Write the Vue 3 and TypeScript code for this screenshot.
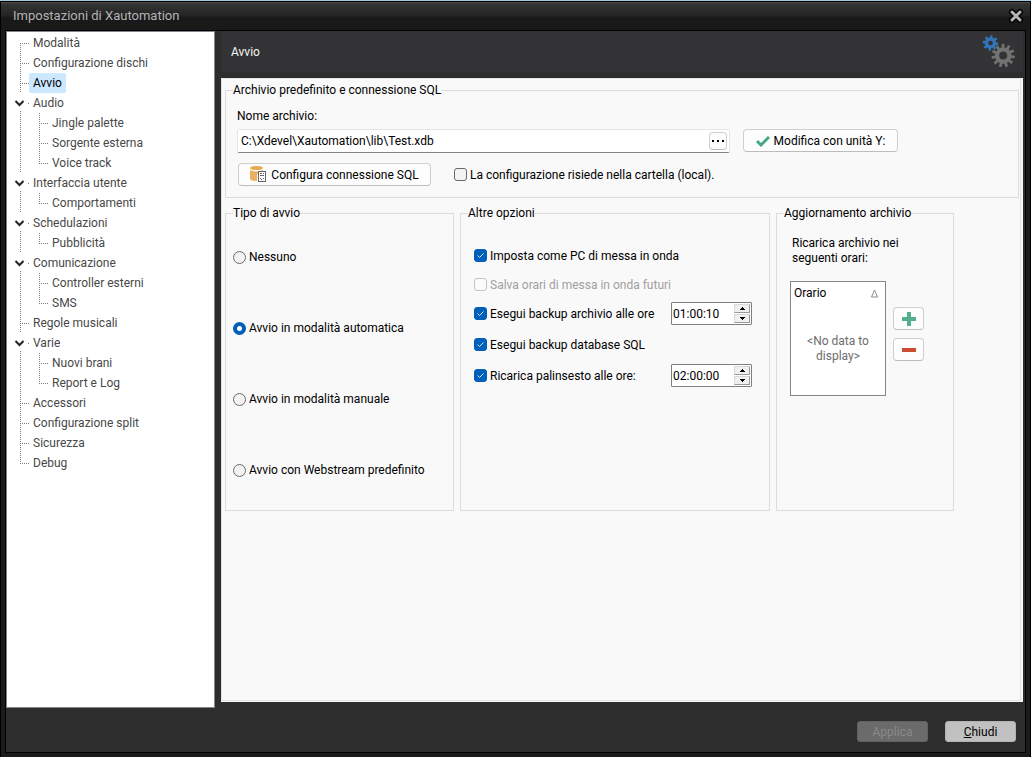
<script setup lang="ts">
import { ref } from 'vue'

interface TreeRow {
  label: string
  level: 0 | 1
  open?: boolean
  last?: boolean
}

const tree: TreeRow[] = [
  { label: 'Modalità', level: 0 },
  { label: 'Configurazione dischi', level: 0 },
  { label: 'Avvio', level: 0 },
  { label: 'Audio', level: 0, open: true },
  { label: 'Jingle palette', level: 1 },
  { label: 'Sorgente esterna', level: 1 },
  { label: 'Voice track', level: 1, last: true },
  { label: 'Interfaccia utente', level: 0, open: true },
  { label: 'Comportamenti', level: 1, last: true },
  { label: 'Schedulazioni', level: 0, open: true },
  { label: 'Pubblicità', level: 1, last: true },
  { label: 'Comunicazione', level: 0, open: true },
  { label: 'Controller esterni', level: 1 },
  { label: 'SMS', level: 1, last: true },
  { label: 'Regole musicali', level: 0 },
  { label: 'Varie', level: 0, open: true },
  { label: 'Nuovi brani', level: 1 },
  { label: 'Report e Log', level: 1, last: true },
  { label: 'Accessori', level: 0 },
  { label: 'Configurazione split', level: 0 },
  { label: 'Sicurezza', level: 0 },
  { label: 'Debug', level: 0, last: true },
]

function guides(row: TreeRow, index: number): string {
  if (row.level === 1) {
    return `M13.5 0V20M32.5 0V${row.last ? 10 : 20}M32 10.5H41`
  }
  if (row.open) {
    return 'M13.5 18V20M21 10.5H22'
  }
  return `M13.5 ${index === 0 ? 10 : 0}V${row.last ? 10 : 20}M13 10.5H22`
}

const selected = ref('Avvio')
const archive = ref('C:\\Xdevel\\Xautomation\\lib\\Test.xdb')
const local = ref(false)
const modes = ['Nessuno', 'Avvio in modalità automatica', 'Avvio in modalità manuale', 'Avvio con Webstream predefinito']
const mode = ref(modes[1])
const onAir = ref(true)
const future = ref(false)
const backup = ref(true)
const backupSql = ref(true)
const reload = ref(true)
const times = ref({ backup: '01:00:10', reload: '02:00:00' })

function step(key: 'backup' | 'reload', delta: number) {
  const [h, m, s] = times.value[key].split(':').map(Number)
  const total = (h * 3600 + m * 60 + s + delta + 86400) % 86400
  times.value[key] = [Math.floor(total / 3600), Math.floor(total / 60) % 60, total % 60]
    .map((n) => String(n).padStart(2, '0'))
    .join(':')
}

function gear(cx: number, cy: number, outer: number, inner: number, hole: number, teeth: number): string {
  const pts: string[] = []
  const pitch = (Math.PI * 2) / teeth
  for (let i = 0; i < teeth; i++) {
    const a = i * pitch + 0.12
    for (const [r, o] of [[inner, -0.3], [outer, -0.2], [outer, 0.2], [inner, 0.3]]) {
      pts.push(`${(cx + r * Math.cos(a + o * pitch)).toFixed(2)} ${(cy + r * Math.sin(a + o * pitch)).toFixed(2)}`)
    }
  }
  return `M${pts.join('L')}ZM${cx - hole} ${cy}a${hole} ${hole} 0 1 0 ${hole * 2} 0a${hole} ${hole} 0 1 0 ${-hole * 2} 0Z`
}
const blueGear = gear(8.5, 8, 7.8, 5.6, 2.3, 8)
const greyGear = gear(21.2, 20.6, 11.8, 8.2, 4, 11)
</script>

<template>
  <div class="window">
    <header class="titlebar">
      <h1>Impostazioni di Xautomation</h1>
      <button class="close" type="button" aria-label="Chiudi finestra">
        <svg width="16" height="16" viewBox="0 0 16 16">
          <path d="M4 4L12 12M12 4L4 12" stroke="#000" stroke-width="6" stroke-linecap="round" />
          <path d="M4 4L12 12M12 4L4 12" stroke="#b4b4b4" stroke-width="3" stroke-linecap="round" />
        </svg>
      </button>
    </header>

    <div class="client">
      <div class="columns">
        <nav class="sidebar">
          <ul>
            <li v-for="(row, i) in tree" :key="row.label">
              <svg :width="row.level ? 41 : 22" height="20">
                <path :d="guides(row, i)" fill="none" stroke="#7b7b7b" stroke-dasharray="1 1" />
                <path v-if="row.open" d="M8.5 8L12.5 12L16.5 8" fill="none" stroke="#222" stroke-width="2" />
              </svg>
              <a href="#" :class="{ selected: row.label === selected }" @click.prevent="selected = row.label">{{ row.label }}</a>
            </li>
          </ul>
        </nav>

        <main class="page">
          <div class="page-head">
            <h2>Avvio</h2>
            <svg width="34" height="34" viewBox="0 0 34 34">
              <path :d="blueGear" fill="#3373b8" fill-rule="evenodd" />
              <path :d="greyGear" fill="#727272" fill-rule="evenodd" />
            </svg>
          </div>

          <div class="panel">
            <div class="panel-body">
              <fieldset class="archive">
                <legend>Archivio predefinito e connessione SQL</legend>
                <label for="archive">Nome archivio:</label>
                <div class="line top">
                  <div class="path-box">
                    <input id="archive" v-model="archive" type="text" />
                    <button type="button" class="btn dots" aria-label="Sfoglia">
                      <svg width="12" height="2"><path d="M0 0h2v2H0zM5 0h2v2H5zM10 0h2v2h-2z" /></svg>
                    </button>
                  </div>
                  <button type="button" class="btn modify">
                    <svg width="14" height="12" viewBox="0 0 14 12"><path d="M1 6L5 10L13 2" fill="none" stroke="#45a785" stroke-width="3" /></svg>
                    Modifica con unità Y:
                  </button>
                </div>
                <div class="line sql">
                  <button type="button" class="btn configure">
                    <svg width="17" height="17" viewBox="0 0 17 17">
                      <path d="M0 4V13Q1 15 7 15V8H13V4Q6 7 0 4Z" fill="#e8b060" />
                      <ellipse cx="6.5" cy="2" rx="6.5" ry="2" fill="#e8a850" />
                      <rect x="8.5" y="5.5" width="7" height="10" fill="#fff" stroke="#666" />
                      <path d="M10 7.5h2M13 7.5h1M10 9.5h4M10 12.500h1M13 12.500h1M11 13.500h1" stroke="#666" />
                    </svg>
                    Configura connessione SQL
                  </button>
                  <label class="check"><input v-model="local" type="checkbox" />La configurazione risiede nella cartella (local).</label>
                </div>
              </fieldset>

              <div class="groups">
                <fieldset class="modes">
                  <legend>Tipo di avvio</legend>
                  <div class="radios">
                    <label v-for="m in modes" :key="m" class="check"><input v-model="mode" type="radio" name="mode" :value="m" />{{ m }}</label>
                  </div>
                </fieldset>

                <fieldset class="options">
                  <legend>Altre opzioni</legend>
                  <div class="rows">
                    <div class="row"><label class="check"><input v-model="onAir" type="checkbox" />Imposta come PC di messa in onda</label></div>
                    <div class="row"><label class="check off"><input v-model="future" type="checkbox" disabled />Salva orari di messa in onda futuri</label></div>
                    <div class="row">
                      <label class="check"><input v-model="backup" type="checkbox" />Esegui backup archivio alle ore</label>
                      <div class="spin">
                        <input v-model="times.backup" type="text" aria-label="Ora backup archivio" />
                        <div class="arrows">
                          <button type="button" aria-label="Aumenta ora backup" @click="step('backup', 1)"><svg width="5" height="3"><path d="M2 0h1v1h1v1h1v1H0V2h1V1h1z" /></svg></button>
                          <button type="button" aria-label="Diminuisci ora backup" @click="step('backup', -1)"><svg width="5" height="3"><path d="M0 0h5v1H4v1H3v1H2V2H1V1H0z" /></svg></button>
                        </div>
                      </div>
                    </div>
                  </div>
                  <div class="rows later">
                    <div class="row"><label class="check"><input v-model="backupSql" type="checkbox" />Esegui backup database SQL</label></div>
                    <div class="row">
                      <label class="check"><input v-model="reload" type="checkbox" />Ricarica palinsesto alle ore:</label>
                      <div class="spin">
                        <input v-model="times.reload" type="text" aria-label="Ora ricarica palinsesto" />
                        <div class="arrows">
                          <button type="button" aria-label="Aumenta ora ricarica" @click="step('reload', 1)"><svg width="5" height="3"><path d="M2 0h1v1h1v1h1v1H0V2h1V1h1z" /></svg></button>
                          <button type="button" aria-label="Diminuisci ora ricarica" @click="step('reload', -1)"><svg width="5" height="3"><path d="M0 0h5v1H4v1H3v1H2V2H1V1H0z" /></svg></button>
                        </div>
                      </div>
                    </div>
                  </div>
                </fieldset>

                <fieldset class="refresh">
                  <legend>Aggiornamento archivio</legend>
                  <p>Ricarica archivio nei<br />seguenti orari:</p>
                  <div class="schedule">
                    <table>
                      <thead>
                        <tr>
                          <th>
                            <div class="th">
                              Orario
                              <svg width="9" height="9"><path d="M4.500 1L7.500 8H1.500Z" fill="none" stroke="#8a8a8a" /></svg>
                            </div>
                          </th>
                        </tr>
                      </thead>
                      <tbody>
                        <tr><td>&lt;No data to<br />display&gt;</td></tr>
                      </tbody>
                    </table>
                    <div class="tools">
                      <button type="button" class="btn" aria-label="Aggiungi orario"><svg width="14" height="14"><path d="M5 0h4v5h5v4H9v5H5V9H0V5h5z" fill="#53ae8b" /></svg></button>
                      <button type="button" class="btn" aria-label="Rimuovi orario"><svg width="14" height="14"><path d="M0 5h14v4H0z" fill="#cc4b33" /></svg></button>
                    </div>
                  </div>
                </fieldset>
              </div>
            </div>
          </div>
        </main>
      </div>

      <footer class="footer">
        <button type="button" disabled>Applica</button>
        <button type="button"><span><u>C</u>hiudi</span></button>
      </footer>
    </div>
  </div>
</template>

<style>
body {
  margin: 0;
  background: #1a1a1a;
}
</style>

<style scoped>
* {
  box-sizing: border-box;
}
svg {
  display: block;
  flex: none;
}
button,
input {
  font: inherit;
  color: inherit;
  margin: 0;
  padding: 0;
}
.window {
  display: flex;
  flex-direction: column;
  min-height: 100vh;
  padding: 0 5px 4px;
  border-top: 1px solid #a3c8da;
  background: #1a1a1a;
  box-shadow: inset 1px 0 #000, inset -1px 0 #000;
  color: #000;
  font: 12px/16px Roboto, "Noto Sans", sans-serif;
}
.titlebar {
  display: flex;
  align-items: center;
  justify-content: space-between;
  height: 29px;
  margin: 0 -4px;
  padding: 0 6px 0 12px;
  background: linear-gradient(#000 1px, #4a4c49 1px, #343434 3px, #232323 15px, #191919 16px);
}
h1 {
  margin: 0;
  color: #b4b4b4;
  font: 13px/16px Roboto, "Noto Sans", sans-serif;
}
.close {
  border: 0;
  background: none;
}
.client {
  display: flex;
  flex: 1;
  flex-direction: column;
  border: 1px solid #000;
  background: #2d2d2d;
}
.columns {
  display: grid;
  flex: 1;
  grid-template-columns: 209px minmax(0, 1fr);
  gap: 6px;
  padding-right: 2px;
}
.sidebar {
  border: 1px solid #7f868e;
  padding-top: 1px;
  background: #fff;
}
.sidebar ul {
  margin: 0;
  padding: 0;
  list-style: none;
}
.sidebar li {
  display: flex;
  height: 20px;
}
.sidebar a {
  padding: 0 4px;
  border-radius: 2px;
  color: #484848;
  line-height: 20px;
  text-decoration: none;
}
.sidebar a.selected {
  background: #cce8ff;
  color: #000;
}
.page {
  display: flex;
  flex-direction: column;
  gap: 6px;
  padding-bottom: 6px;
}
.page-head {
  display: flex;
  align-items: center;
  justify-content: space-between;
  height: 41px;
  padding: 0 7px 0 10px;
  background: #333335;
}
h2 {
  margin: 0;
  color: #f4f4f4;
  font: 12px/16px Roboto, "Noto Sans", sans-serif;
}
.panel {
  display: flex;
  flex: 1;
  padding: 0 2px 1px 0;
  background: #f6f6f6;
}
.panel-body {
  display: flex;
  flex: 1;
  flex-direction: column;
  gap: 7px;
  padding: 3px 1px 3px 3px;
  border: 1px solid #e4e4e4;
  background: #f9f9f9;
}
fieldset {
  min-width: 0;
  margin: 0;
  padding: 0;
  border: 1px solid #dcdcdc;
}
legend {
  margin-left: 7px;
  padding: 0;
}
.archive {
  padding: 10px 10px 11px 11px;
}
.archive legend {
  margin-left: -4px;
}
.archive > label {
  display: block;
  margin-bottom: 5px;
}
.line {
  display: flex;
  align-items: center;
  gap: 13px;
}
.line.top {
  align-items: flex-start;
}
.line.sql {
  gap: 23px;
  margin: 10px 0 0 1px;
}
.path-box {
  display: flex;
  flex: 0 1 493px;
  align-items: center;
  height: 24px;
  padding: 0 2px 0 3px;
  border: 1px solid #e5e5e5;
  border-bottom-color: #868686;
  border-radius: 2px;
  background: #fff;
}
.path-box input {
  flex: 1;
  min-width: 0;
  border: 0;
  outline: 0;
  background: none;
}
.btn {
  display: flex;
  align-items: center;
  justify-content: center;
  height: 23px;
  border: 1px solid #cfcfcf;
  border-bottom-color: #bcbcbc;
  border-radius: 4px;
  background: #fdfdfd;
  white-space: nowrap;
}
.dots {
  width: 18px;
  height: 18px;
}
.modify {
  gap: 4px;
  width: 155px;
}
.configure {
  gap: 4px;
  width: 193px;
}
.check {
  display: flex;
  align-items: center;
  gap: 3px;
  white-space: nowrap;
}
.check input {
  appearance: none;
  flex: none;
  width: 13px;
  height: 13px;
  border: 1px solid #6a6a6a;
  border-radius: 3px;
  background: #f3f3f3;
}
.check input[type="radio"] {
  border-radius: 50%;
}
.check input[type="radio"]:checked {
  border: 4px solid #005fb8;
  background: #fff;
}
.check input[type="checkbox"]:checked {
  border-color: #005fb8;
  background:
    url("data:image/svg+xml,%3Csvg xmlns='http://www.w3.org/2000/svg' width='11' height='11'%3E%3Cpath d='M2.500 5.500L4.500 7.500L8.500 3.500' fill='none' stroke='%23cfe4f7'/%3E%3C/svg%3E")
    #005fb8;
}
.check.off {
  color: #a0a0a0;
}
.check.off input {
  border-color: #c4c4c4;
  background: #fbfbfb;
}
.groups {
  display: grid;
  grid-template-columns: 229px 310px 178px;
  gap: 6px;
}
.radios {
  display: flex;
  flex-direction: column;
  gap: 55px;
  padding: 28px 7px 32px;
}
.rows {
  display: flex;
  flex-direction: column;
  gap: 6px;
  padding: 23px 17px 0 13px;
}
.rows.later {
  gap: 8px;
  padding-top: 8px;
}
.row {
  display: flex;
  align-items: center;
  justify-content: space-between;
  height: 23px;
}
.spin {
  display: flex;
  width: 81px;
  height: 23px;
  border: 1px solid #7f7f7f;
  border-radius: 1px;
  background: #fff;
}
.spin input {
  flex: 1;
  min-width: 0;
  padding-left: 1px;
  border: 0;
  outline: 0;
  background: none;
}
.arrows {
  display: flex;
  flex-direction: column;
  gap: 1px;
  width: 17px;
  padding: 1px 1px 1px 0;
}
.arrows button {
  display: flex;
  flex: 1;
  align-items: center;
  justify-content: center;
  border: 1px solid #d8d8d8;
  border-right-color: #9a9a9a;
  border-bottom-color: #9a9a9a;
  background: #f0f0f0;
}
.refresh p {
  margin: 15px 0 0 15px;
  line-height: 15px;
}
.schedule {
  display: flex;
  align-items: flex-start;
  gap: 7px;
  margin: 15px 0 0 13px;
}
table {
  width: 96px;
  height: 115px;
  border: 1px solid #828790;
  border-spacing: 0;
  background: #fff;
}
th {
  height: 22px;
  padding: 0 6px 0 3px;
  font-weight: normal;
}
.th {
  display: flex;
  align-items: center;
  justify-content: space-between;
}
td {
  padding: 0 0 2px;
  color: #6d6d6d;
  line-height: 15px;
  text-align: center;
}
.tools {
  display: flex;
  flex-direction: column;
  gap: 8px;
  padding-top: 26px;
}
.tools .btn {
  width: 31px;
}
.footer {
  display: flex;
  justify-content: flex-end;
  gap: 17px;
  padding: 13px 9px 10px;
}
.footer button {
  width: 71px;
  height: 21px;
  border: 1px solid #b2b2b2;
  border-radius: 3px;
  background: #c1c1c1;
}
.footer button:disabled {
  border-color: #626262;
  background: #6b6b6b;
  color: #8a8a8a;
}
</style>
